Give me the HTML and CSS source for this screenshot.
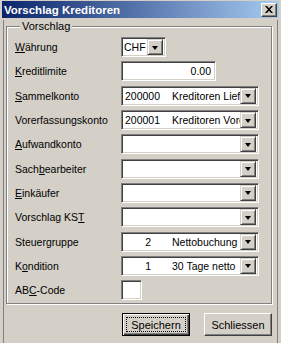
FILE: index.html
```html
<!DOCTYPE html>
<html lang="de">
<head>
  <meta charset="UTF-8" />
  <title>Vorschlag Kreditoren</title>
  <link rel="stylesheet" href="styles.css">
</head>

<body>
  <div class="window">
    <div class="titlebar">
      <span class="title">Vorschlag Kreditoren</span>
      <span class="close">
        <svg width="8" height="7" viewBox="0 0 8 7">
          <path d="M0 0h2l2 2.2L6 0h2L5 3.5 8 7H6L4 4.8 2 7H0l3-3.5z" fill="#000"/>
        </svg>
      </span>
    </div>

    <div class="client">
      <fieldset class="group">
        <legend>Vorschlag</legend>
        <div class="form">
          <label><u>W</u>ährung</label>
          <div class="box combo small">
            <span class="value">CHF</span>
            <span class="drop"><i></i></span>
          </div>

          <label><u>K</u>reditlimite</label>
          <div class="box medium"><span class="value right">0.00</span></div>

          <label><u>S</u>ammelkonto</label>
          <div class="box combo">
            <span class="value"><span class="code">200000</span>Kreditoren Liefe</span>
            <span class="drop"><i></i></span>
          </div>

          <label>Vorerfassungskonto</label>
          <div class="box combo">
            <span class="value"><span class="code">200001</span>Kreditoren Vore</span>
            <span class="drop"><i></i></span>
          </div>

          <label><u>A</u>ufwandkonto</label>
          <div class="box combo"><span class="value"></span><span class="drop"><i></i></span></div>

          <label>Sach<u>b</u>earbeiter</label>
          <div class="box combo"><span class="value"></span><span class="drop"><i></i></span></div>

          <label><u>E</u>inkäufer</label>
          <div class="box combo"><span class="value"></span><span class="drop"><i></i></span></div>

          <label>Vorschlag KS<u>T</u></label>
          <div class="box combo"><span class="value"></span><span class="drop"><i></i></span></div>

          <label>Steuergruppe</label>
          <div class="box combo">
            <span class="value"><span class="code num">2</span>Nettobuchung</span>
            <span class="drop"><i></i></span>
          </div>

          <label>K<u>o</u>ndition</label>
          <div class="box combo">
            <span class="value"><span class="code num">1</span>30 Tage netto</span>
            <span class="drop"><i></i></span>
          </div>

          <label>AB<u>C</u>-Code</label>
          <div class="box tiny"></div>
        </div>
      </fieldset>

      <div class="actions">
        <button class="btn default"><span class="focus">Speichern</span></button>
        <button class="btn">Schliessen</button>
      </div>
    </div>
  </div>
</body>
</html>
```

FILE: styles.css
```css
body {
  margin: 0;
  background: #d4d0c8;
  font-family: "Liberation Sans", Arial, sans-serif;
  font-size: 11px;
  color: #000;
}

.window {
  width: 281px;
  height: 343px;
  box-sizing: border-box;
  padding-top: 1px;
  overflow: hidden;
}

.titlebar {
  height: 17px;
  margin: 0 2px 0 2px;
  padding: 0 2px;
  display: flex;
  align-items: center;
  justify-content: space-between;
  background: linear-gradient(to right, #0a246a, #a6caf0);
}

.title {
  color: #fff;
  font-weight: bold;
  font-size: 11.5px;
}

.close {
  width: 16px;
  height: 14px;
  box-sizing: border-box;
  display: flex;
  align-items: center;
  justify-content: center;
  background: #d4d0c8;
  border: 1px solid;
  border-color: #fff #404040 #404040 #fff;
  box-shadow: inset -1px -1px #808080;
}

.client {
  margin: 0 3px 0 3px;
  height: 325px;
  border-left: 1px solid #808080;
  border-right: 1px solid #808080;
  box-sizing: border-box;
  padding: 0 5px 0 2px;
}

.group {
  margin: 2px 0 0 0;
  padding: 2px 6px 0 8px;
  height: 284px;
  box-sizing: border-box;
  border: 1px solid #808080;
  box-shadow: inset 1px 1px #fff, 1px 1px #fff;
  min-width: 0;
}

.group legend {
  padding: 0 2px;
  margin-left: 5px;
  line-height: 13px;
  background: #d4d0c8;
}

.form {
  display: grid;
  grid-template-columns: 106px auto;
  grid-auto-rows: 24.3px;
  align-items: center;
  justify-items: start;
  font-size: 10.5px;
}

.box {
  height: 20px;
  box-sizing: border-box;
  background: #fff;
  border: 1px solid;
  border-color: #808080 #fff #fff #808080;
  box-shadow: inset 1px 1px #404040, inset -1px -1px #d4d0c8;
  padding: 2px;
  display: flex;
  align-items: center;
}

.combo { width: 138px; }
.box.small { width: 45px; padding-left: 1px; }
.box.medium { width: 95px; }
.box.tiny { width: 21px; }

.value {
  flex: 1;
  min-width: 0;
  overflow: hidden;
  white-space: nowrap;
  padding-left: 1px;
}

.value.right {
  text-align: right;
  padding-right: 2px;
}

.code {
  display: inline-block;
  width: 47px;
}

.code.num {
  text-align: right;
  width: 26px;
  margin-right: 21px;
}

.drop {
  flex: none;
  width: 16px;
  height: 16px;
  box-sizing: border-box;
  background: #d4d0c8;
  border: 1px solid;
  border-color: #d4d0c8 #404040 #404040 #d4d0c8;
  box-shadow: inset 1px 1px #fff, inset -1px -1px #808080;
  display: flex;
  align-items: center;
  justify-content: center;
}

.drop i {
  width: 0;
  height: 0;
  border-left: 3.5px solid transparent;
  border-right: 3.5px solid transparent;
  border-top: 4px solid #000;
  margin-top: 1px;
}

.actions {
  display: flex;
  justify-content: flex-end;
  gap: 14px;
  margin-top: 9px;
}

.btn {
  width: 68px;
  height: 23px;
  box-sizing: border-box;
  padding: 0;
  font-family: inherit;
  font-size: 11px;
  color: #000;
  background: #d4d0c8;
  border: 1px solid;
  border-color: #fff #404040 #404040 #fff;
  box-shadow: inset -1px -1px #808080;
}

.btn.default {
  border-color: #000;
  box-shadow: inset 1px 1px #fff, inset -1px -1px #404040, inset -2px -2px #808080;
  display: flex;
  padding: 3px;
}

.focus {
  flex: 1;
  display: flex;
  align-items: center;
  justify-content: center;
  border: 1px dotted #000;
}
```
